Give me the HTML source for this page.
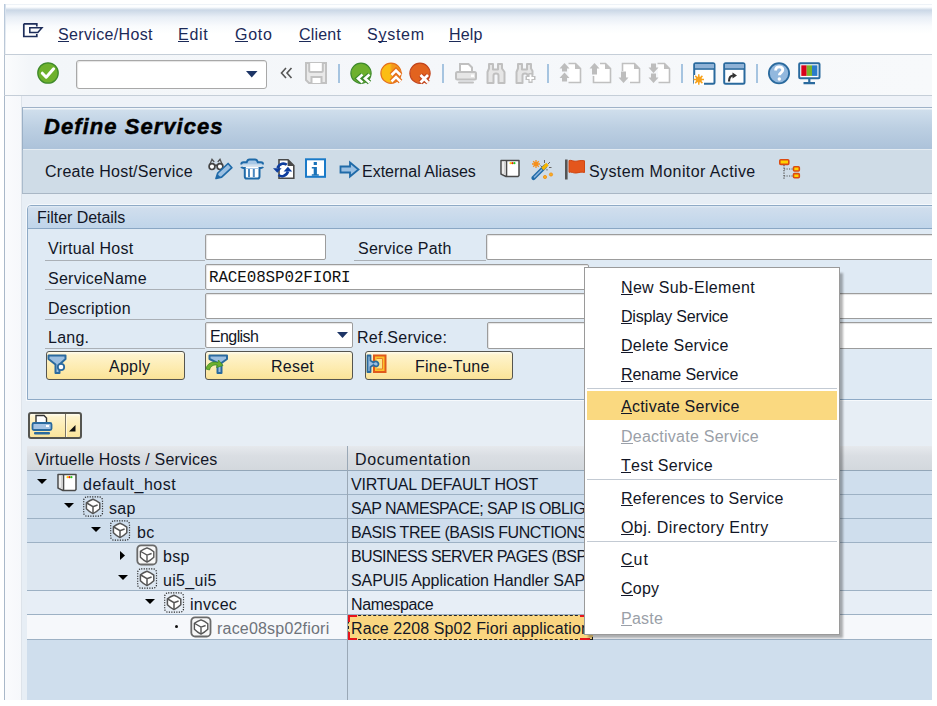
<!DOCTYPE html>
<html><head><meta charset="utf-8">
<style>
*{margin:0;padding:0;box-sizing:border-box}
html,body{width:937px;height:706px;overflow:hidden;background:#fff}
body{position:relative;font-family:"Liberation Sans",sans-serif;font-size:16px;color:#121626}
.a{position:absolute}
.t{position:absolute;white-space:nowrap;line-height:20px;font-size:16px;letter-spacing:0.25px}
u{text-decoration:none;position:relative}
u:after{content:"";position:absolute;left:0;right:0;bottom:1px;height:1px;background:currentColor}
svg{position:absolute;overflow:visible}
.inp{position:absolute;background:#fff;border:1px solid #9c9c9c;border-radius:2px;box-shadow:inset 1px 1px 1px #e4e4e4}
.lbl{position:absolute;height:1px;background:#aab0b6}
.btn{position:absolute;height:29px;border:1px solid #55554f;border-radius:3px;background:linear-gradient(#fffdf0 0,#fef3cc 3px,#fdedb4 14px,#fbe49a 26px,#f5dc90 28px)}
.btn .t{top:5px}
.mi{position:absolute;left:621px;white-space:nowrap;line-height:20px;font-size:16px;color:#121626;letter-spacing:0.25px}
.dis{color:#9a9fa8}
.sep{position:absolute;height:1px;background:#c3cad3}
.tsep{position:absolute;width:2px;background:#a6c4e0}
.hl{position:absolute;left:27px;width:905px;height:1px;background:#9db1c4}
</style></head><body>
<div id="clip" style="position:absolute;left:0;top:0;width:932px;height:700px;overflow:hidden">
<!-- frame -->
<div class="a" style="left:4px;top:4px;width:928px;height:696px;background:#f2f5f9"></div>

<!-- menu bar -->
<div class="a" style="left:4px;top:4px;width:928px;height:50px;background:linear-gradient(#dfe7f0 0,#fdfeff 1px,#fdfeff 3px,#cad7e6 6px,#e8eef6 13px,#f9fbfd 22px,#fff 30px,#fff 50px)"></div>
<div class="a" style="left:4px;top:4px;width:1px;height:50px;background:linear-gradient(#b8c9dc,#bcc8d6)"></div><div class="a" style="left:5px;top:4px;width:1px;height:50px;background:linear-gradient(#d5e0ec,#eef2f6)"></div>
<div class="a" style="left:4px;top:54px;width:928px;height:1px;background:#c5ced8"></div>
<svg style="left:22px;top:22px" width="22" height="16" viewBox="0 0 22 16"><path d="M1.8 1.8H14.8V4.5M1.8 1.8V14.5H14.8V12" fill="none" stroke="#1d2d5a" stroke-width="1.7"/><path d="M7.8 5.8H20L15.8 10.6H7.8Z" fill="none" stroke="#1d2d5a" stroke-width="1.5"/></svg>
<div class="t" style="left:58px;top:25px;color:#1c2a58;letter-spacing:0.35px"><u>S</u>ervice/Host</div>
<div class="t" style="left:178px;top:25px;color:#1c2a58;letter-spacing:0.7px"><u>E</u>dit</div>
<div class="t" style="left:235px;top:25px;color:#1c2a58;letter-spacing:0.75px"><u>G</u>oto</div>
<div class="t" style="left:299px;top:25px;color:#1c2a58;letter-spacing:0.2px"><u>C</u>lient</div>
<div class="t" style="left:367px;top:25px;color:#1c2a58;letter-spacing:0.75px">S<u>y</u>stem</div>
<div class="t" style="left:449px;top:25px;color:#1c2a58;letter-spacing:0.2px"><u>H</u>elp</div>

<!-- system toolbar -->
<div class="a" style="left:4px;top:55px;width:928px;height:40px;background:linear-gradient(90deg,#fbfcfd 0,#f3f6f9 25px,#f5f7fa 50%,#f7f9fb)"></div>
<div class="a" style="left:4px;top:55px;width:1px;height:40px;background:#b3c0cf"></div>
<div class="a" style="left:4px;top:95px;width:928px;height:1px;background:#c5ced8"></div>
<!-- green check -->
<svg style="left:37px;top:62px" width="22" height="22" viewBox="0 0 22 22"><circle cx="11" cy="11" r="10.2" fill="#6eb12c" stroke="#3f8a2a" stroke-width="1.3"/><path d="M5.3 11.2L9.2 15.2L16.6 6.8" fill="none" stroke="#fff" stroke-width="3" stroke-linecap="round" stroke-linejoin="round"/></svg>
<!-- command field -->
<div class="inp" style="left:76px;top:60px;width:191px;height:29px;border:1.5px solid #a8a8a8;border-radius:3px"></div>
<svg style="left:246px;top:71px" width="12" height="7" viewBox="0 0 12 7"><path d="M0 0H11.5L5.75 6.5Z" fill="#1d3566"/></svg>
<svg style="left:280px;top:67px" width="13" height="12" viewBox="0 0 13 12"><path d="M6 1L1.5 6L6 11M11.5 1L7 6L11.5 11" fill="none" stroke="#555" stroke-width="1.6"/></svg>
<!-- save -->
<svg style="left:305px;top:62px" width="22" height="22" viewBox="0 0 22 22"><path d="M1 1H21V21H4L1 18Z" fill="#e9e9e9" stroke="#c2c2c2" stroke-width="2"/><path d="M4.2 1V8.5Q4.2 10 5.7 10H16.3Q17.8 10 17.8 8.5V1" fill="#fff" stroke="#c2c2c2" stroke-width="2"/><path d="M6.5 21V15H16.5V21" fill="#fff" stroke="#c2c2c2" stroke-width="2"/></svg>
<div class="tsep" style="left:338px;top:64px;height:19px"></div>
<!-- back -->
<svg style="left:350px;top:62px" width="23" height="23" viewBox="0 0 23 23"><circle cx="11" cy="11.2" r="10.1" fill="#6eb12e" stroke="#3e8a2c" stroke-width="1.2"/><path d="M12.5 12.5L8 16.5L12.5 20.5M19.5 12.5L15 16.5L19.5 20.5" fill="none" stroke="#3e8a2c" stroke-width="5" stroke-linejoin="miter"/><path d="M12.5 12.5L8 16.5L12.5 20.5M19.5 12.5L15 16.5L19.5 20.5" fill="none" stroke="#fff" stroke-width="2.6"/></svg>
<!-- up -->
<svg style="left:380px;top:62px" width="23" height="23" viewBox="0 0 23 23"><defs><linearGradient id="og" x1="0" x2="1"><stop offset="0.45" stop-color="#fbbd14"/><stop offset="0.55" stop-color="#f39a1c"/></linearGradient></defs><circle cx="11" cy="11.2" r="10.1" fill="url(#og)" stroke="#e5701c" stroke-width="1.2"/><path d="M11.5 13L16 8.5L20.5 13M11.5 19.5L16 15L20.5 19.5" fill="none" stroke="#e5701c" stroke-width="5.2"/><path d="M11.5 13L16 8.5L20.5 13M11.5 19.5L16 15L20.5 19.5" fill="none" stroke="#fff" stroke-width="2.6"/></svg>
<!-- cancel -->
<svg style="left:409px;top:62px" width="23" height="23" viewBox="0 0 23 23"><circle cx="11" cy="11.2" r="10.1" fill="#e2631f" stroke="#c2441c" stroke-width="1.2"/><path d="M11.5 13L19 20.5M19 13L11.5 20.5" fill="none" stroke="#c2441c" stroke-width="5"/><path d="M11.5 13L19 20.5M19 13L11.5 20.5" fill="none" stroke="#fff" stroke-width="2.8"/></svg>
<div class="tsep" style="left:442px;top:64px;height:19px"></div>
<!-- print -->
<svg style="left:455px;top:62px" width="22" height="22" viewBox="0 0 22 22"><path d="M5 9V2H13.5L17 5.5V9" fill="#fff" stroke="#c0c0c0" stroke-width="2"/><rect x="1" y="10" width="20" height="7.5" rx="1.5" fill="#e6e6e6" stroke="#c0c0c0" stroke-width="2"/><rect x="16" y="12.5" width="3" height="2.5" fill="#fff"/><rect x="3" y="19.6" width="16" height="2" rx="1" fill="#c0c0c0"/></svg>
<!-- binoculars -->
<svg style="left:486px;top:62px" width="20" height="22" viewBox="0 0 20 22"><path d="M3 6.5V2H7V7.5H12V2H16V6.5L18.5 10V21H12.5V13.5Q12.5 11.5 10 11.5Q7.5 11.5 7.5 13.5V21H1.5V10Z" fill="#e6e6e6" stroke="#c0c0c0" stroke-width="2" stroke-linejoin="round"/></svg>
<svg style="left:515px;top:62px" width="22" height="22" viewBox="0 0 22 22"><path d="M3 6.5V2H7V7.5H12V2H16V6.5L17.5 9V13H12.5V13.5Q12.5 11.5 10 11.5Q7.5 11.5 7.5 13.5V21H1.5V10Z" fill="#e6e6e6" stroke="#c0c0c0" stroke-width="2" stroke-linejoin="round"/><path d="M15.5 11V21M10.5 16H20.5" stroke="#c0c0c0" stroke-width="4.2"/><path d="M15.5 12.5V19.5M12 16H19" stroke="#fff" stroke-width="1.8"/></svg>
<div class="tsep" style="left:547px;top:64px;height:19px"></div>
<!-- page nav icons -->
<svg style="left:559px;top:62px" width="23" height="22" viewBox="0 0 23 22"><path d="M9.5 1.5H16.5L21.5 6.5V20.5H9.5" fill="#fff" stroke="#c0c0c0" stroke-width="1.6"/><path d="M16 1L22 7H16Z" fill="#c0c0c0"/><path d="M0.5 6.5L5.5 1L10.5 6.5H8V9.5H3V6.5Z" fill="#bdbdbd"/><path d="M0.5 16L5.5 10.5L10.5 16H8V19.5H3V16Z" fill="#bdbdbd"/></svg>
<svg style="left:589px;top:62px" width="23" height="22" viewBox="0 0 23 22"><path d="M11 1.5H16.5L21.5 6.5V20.5H4.5V14" fill="#fff" stroke="#c0c0c0" stroke-width="1.6"/><path d="M16 1L22 7H16Z" fill="#c0c0c0"/><path d="M0.5 6.5L5.5 1L10.5 6.5H8V12.5H3V6.5Z" fill="#bdbdbd"/></svg>
<svg style="left:618px;top:62px" width="23" height="22" viewBox="0 0 23 22"><path d="M4.5 9V1.5H16.5L21.5 6.5V20.5H12" fill="#fff" stroke="#c0c0c0" stroke-width="1.6"/><path d="M16 1L22 7H16Z" fill="#c0c0c0"/><path d="M0.5 15.5L5.5 21L10.5 15.5H8V9.5H3V15.5Z" fill="#bdbdbd"/></svg>
<svg style="left:648px;top:62px" width="23" height="22" viewBox="0 0 23 22"><path d="M9.5 1.5H16.5L21.5 6.5V20.5H10.5" fill="#fff" stroke="#c0c0c0" stroke-width="1.6"/><path d="M16 1L22 7H16Z" fill="#c0c0c0"/><path d="M0.5 5.5L5.5 11L10.5 5.5H8V1.5H3V5.5Z" fill="#bdbdbd"/><path d="M0.5 15.5L5.5 21L10.5 15.5H8V11.5H3V15.5Z" fill="#bdbdbd"/></svg>
<div class="tsep" style="left:681px;top:64px;height:19px"></div>
<!-- new session -->
<svg style="left:693px;top:62px" width="23" height="23" viewBox="0 0 23 23"><rect x="1.2" y="1.2" width="20.3" height="20.6" rx="1.5" fill="#fff" stroke="#2a6a9e" stroke-width="2"/><rect x="2" y="2" width="19" height="4.5" fill="#8fb2d6"/><path d="M1.5 7H21.5" stroke="#2a6a9e" stroke-width="1.6"/><rect x="1" y="13" width="10" height="10" fill="#fff"/><circle cx="5.8" cy="17.5" r="3" fill="#f7a21c"/><path d="M5.8 12.3V22.7M0.6 17.5H11M2.2 13.9L9.4 21.1M9.4 13.9L2.2 21.1" stroke="#f7a21c" stroke-width="1.5"/></svg>
<svg style="left:723px;top:62px" width="23" height="23" viewBox="0 0 23 23"><rect x="1.2" y="1.2" width="20.3" height="20.6" rx="1.5" fill="#fff" stroke="#2a6a9e" stroke-width="2"/><rect x="2" y="2" width="19" height="4.5" fill="#8fb2d6"/><path d="M1.5 7H21.5" stroke="#2a6a9e" stroke-width="1.6"/><path d="M6 19.5C6 15.5 7.5 13.5 10.5 13.5" fill="none" stroke="#333" stroke-width="2.2"/><path d="M9.5 10.5L14 13.5L9.5 16.5Z" fill="#333"/></svg>
<div class="tsep" style="left:756px;top:64px;height:19px"></div>
<!-- help -->
<svg style="left:768px;top:62px" width="23" height="23" viewBox="0 0 23 23"><circle cx="11" cy="11.2" r="10.1" fill="#92b8de" stroke="#2a6a9e" stroke-width="1.8"/><path d="M7.6 8.5C7.6 5.8 9.2 4.8 11.2 4.8C13.3 4.8 14.8 6 14.8 8C14.8 10.5 11.3 10.6 11.3 13.3" fill="none" stroke="#fff" stroke-width="2.8"/><circle cx="11.3" cy="17" r="1.7" fill="#fff"/></svg>
<!-- monitor -->
<svg style="left:798px;top:62px" width="23" height="23" viewBox="0 0 23 23"><rect x="1.2" y="1.2" width="20.3" height="15" rx="1" fill="#fff" stroke="#2a6a9e" stroke-width="2"/><rect x="3.3" y="3.3" width="5.4" height="10.6" fill="#d9001b"/><rect x="8.7" y="3.3" width="5.3" height="10.6" fill="#7ab52a"/><rect x="14" y="3.3" width="5.4" height="10.6" fill="#2b7cc9"/><path d="M11.3 16.5V20.5M5.5 21.2H17" stroke="#2a6a9e" stroke-width="2.2"/></svg>

<!-- body -->
<div class="a" style="left:5px;top:96px;width:927px;height:604px;background:#edf1f6"></div>
<div class="a" style="left:5px;top:96px;width:16px;height:604px;background:linear-gradient(90deg,#fafbfd,#f6f8fb)"></div>
<div class="a" style="left:21px;top:96px;width:1px;height:604px;background:#dde3ea"></div>
<div class="a" style="left:4px;top:96px;width:1px;height:604px;background:#a9b8c9"></div>
<div class="a" style="left:22px;top:96px;width:910px;height:11px;background:#eef2f8"></div>

<!-- title panel -->
<div class="a" style="left:22px;top:107px;width:910px;height:43px;border-left:1px solid #9bb0c6;border-top:1px solid #9fb2c8;background:linear-gradient(#f2f6fa 0,#f2f6fa 1px,#cfdeec 2px,#bccfe2 20px,#adc3da 40px)"></div>
<div class="a" style="left:23px;top:149px;width:909px;height:1px;background:#e4ecf2"></div>
<div class="t" style="left:44px;top:115px;font-size:22px;line-height:24px;font-weight:bold;font-style:italic;color:#000;letter-spacing:1.05px;-webkit-text-stroke:0.5px #000">Define Services</div>

<!-- application toolbar -->
<div class="a" style="left:22px;top:150px;width:910px;height:43px;background:#cfdce7;border-left:1px solid #aabbcc"></div>
<div class="a" style="left:22px;top:193px;width:910px;height:1px;background:#a9b7c5"></div>
<div class="t" style="left:45px;top:162px">Create Host/Service</div>
<!-- glasses pencil -->
<svg style="left:205px;top:156px" width="28" height="26" viewBox="0 0 28 26"><path d="M4.8 8.5L7 3.2L9.2 6M12.8 6L15 3.2L17.2 8.5" stroke="#555" stroke-width="1.3" fill="none"/><circle cx="7" cy="10.6" r="2.9" fill="#fff" stroke="#444" stroke-width="1.7"/><circle cx="15" cy="10.6" r="2.9" fill="#fff" stroke="#444" stroke-width="1.7"/><path d="M9.5 9.3H12.5" stroke="#444" stroke-width="1.6"/><path d="M11 22.5L12.8 17L23.1 7.5L26.9 11.7L16.6 21.2Z" fill="#9cc0e2" stroke="#1f6aa8" stroke-width="1.7" stroke-linejoin="round"/><path d="M11 22.5L12.5 18.2L15.5 21Z" fill="#1f6aa8"/></svg>
<!-- trash -->
<svg style="left:238px;top:156px" width="28" height="26" viewBox="0 0 28 26"><path d="M3.3 8.4Q3.3 6.3 5.5 6.3H8.7Q9.5 3.6 11.5 3.6H17Q19 3.6 19.8 6.3H23Q25 6.3 25 8.4" fill="#a8c8e6" stroke="#1f6aa8" stroke-width="2"/><path d="M4 8.6H24.5V10H4Z" fill="#cfe0f0"/><path d="M3.3 10.8Q3.8 12 6.8 12V20.5Q6.8 22.6 8.8 22.6H19.5Q21.5 22.6 21.5 20.5V12Q24.5 12 25 10.8" fill="#fff" stroke="#1f6aa8" stroke-width="2"/><path d="M11 12.5V21M15.8 12.5V21" stroke="#4a88c0" stroke-width="2"/><path d="M7.8 12.5H20.5" stroke="#a8c8e6" stroke-width="1"/></svg>
<!-- refresh -->
<svg style="left:272px;top:158px" width="23" height="22" viewBox="0 0 23 22"><path d="M7 1.8H16L21.8 7.5V20.2H7Z" fill="#fff" stroke="#4a4a4a" stroke-width="1.6"/><path d="M15.6 1.2L22.4 8H15.6Z" fill="#4a4a4a"/><path d="M14.8 6.8C12.5 4.8 7.5 5 5.5 10" stroke="#0d3d9e" stroke-width="2.6" fill="none"/><path d="M1 10.3H9.6L5.3 14.8Z" fill="#0d3d9e"/><path d="M6.5 17C9 19 14 18.8 16 13.5" stroke="#0d3d9e" stroke-width="2.6" fill="none"/><path d="M11.6 13.4H20.2L15.9 8.8Z" fill="#0d3d9e"/></svg>
<!-- info -->
<svg style="left:305px;top:158px" width="21" height="21" viewBox="0 0 21 21"><rect x="1" y="1.3" width="19" height="17.5" fill="#fff" stroke="#1a7ac8" stroke-width="2"/><rect x="8.7" y="4" width="3.2" height="3" fill="#1a72b8"/><path d="M6.8 9H11.9V16.2H13.8V17.8H6.8V16.2H8.7V10.6H6.8Z" fill="#1a72b8"/></svg>
<!-- arrow -->
<svg style="left:339px;top:161px" width="21" height="17" viewBox="0 0 21 17"><path d="M1.5 5.5H11V1.5L19.5 8.5L11 15.5V11.5H1.5Z" fill="#9cc0e2" stroke="#1f6aa8" stroke-width="1.8" stroke-linejoin="miter"/></svg>
<div class="t" style="left:362px;top:162px;letter-spacing:0px">External Aliases</div>
<!-- book -->
<svg style="left:497px;top:156px" width="26" height="24" viewBox="0 0 26 24"><path d="M4 4.5H22V19.5L21 20.5H9L4 18Z" fill="#fff" stroke="#4a4a4a" stroke-width="1.5" stroke-linejoin="round"/><path d="M9.5 4.5V20.5" stroke="#4a4a4a" stroke-width="1.6"/><rect x="5.4" y="5.6" width="3.2" height="12.6" fill="#d2d2d2"/><path d="M6.2 6V17.5" stroke="#fff" stroke-width="0.9"/><circle cx="13.6" cy="7.2" r="1.1" fill="#ffd000"/><circle cx="15.5" cy="7.2" r="1.1" fill="#ee2200"/><circle cx="17.4" cy="7.2" r="1.1" fill="#22cc22"/></svg>
<!-- wand -->
<svg style="left:530px;top:159px" width="24" height="21" viewBox="0 0 24 21"><path d="M3.5 19L15 7.5" stroke="#1f6aa8" stroke-width="4.2" stroke-linecap="round"/><path d="M4 18.5L12 10.5" stroke="#8cb4dc" stroke-width="1.6"/><path d="M12.5 10L17.5 5" stroke="#f5b400" stroke-width="3.6"/><path d="M6 1V9M2 5H10M3.2 2.2L8.8 7.8M8.8 2.2L3.2 7.8" stroke="#f5901c" stroke-width="1.3"/><circle cx="6" cy="5" r="2" fill="#f5901c"/><path d="M14.5 1V4M20 3L18 5M21.5 8.5H19M10.5 6.5L12 8M17 10V11.5" stroke="#666" stroke-width="1"/><circle cx="15" cy="18" r="1.6" fill="#f8b020" stroke="#f08a10" stroke-width="0.8"/><circle cx="21" cy="15.5" r="1.6" fill="#f8b020" stroke="#f08a10" stroke-width="0.8"/></svg>
<!-- flag -->
<svg style="left:564px;top:159px" width="22" height="21" viewBox="0 0 22 21"><path d="M2.3 0.5V20.5" stroke="#555" stroke-width="2.6"/><path d="M5 1.5C7.5 0.8 9 2.5 12 2.2C15 2 16.5 1 20.5 1.8V13.5C17 12.5 15 13.8 12 14C9 14.2 7.5 12.5 5 13.3Z" fill="#e4561c" stroke="#cf4712" stroke-width="1"/></svg>
<div class="t" style="left:589px;top:162px;letter-spacing:0.4px">System Monitor Active</div>
<!-- tree icon -->
<svg style="left:778px;top:158px" width="23" height="23" viewBox="0 0 23 23"><rect x="1.8" y="1.8" width="9" height="4.6" rx="1" fill="#ffd200" stroke="#dc4a10" stroke-width="1.6"/><rect x="15.5" y="8.8" width="5.8" height="4.2" rx="1" fill="#ffd200" stroke="#dc4a10" stroke-width="1.6"/><rect x="15.5" y="15.6" width="5.8" height="4.2" rx="1" fill="#ffd200" stroke="#dc4a10" stroke-width="1.6"/><path d="M6 7V22M6 11H14.5M6 18H14.5" stroke="#555" stroke-width="1.2" stroke-dasharray="1.2 1.3"/></svg>

<!-- body below -->
<div class="a" style="left:22px;top:194px;width:910px;height:506px;background:#e7eef5"></div>

<!-- group box -->
<div class="a" style="left:26px;top:204px;width:912px;height:197px;border-radius:5px 0 0 0;background:#f6f9fc"></div>
<div class="a" style="left:27px;top:205px;width:910px;height:195px;border:1px solid #8eaac6;border-radius:4px 0 0 0;background:#dfeaf4;overflow:hidden">
  <div class="a" style="left:0;top:0;width:910px;height:23px;background:linear-gradient(#e2ecf6 0,#d0deed 2px,#c0d5ea 21px);border-bottom:1px solid #8aa7c4"></div>
</div>
<div class="t" style="left:37px;top:207.5px;letter-spacing:-0.05px">Filter Details</div>

<div class="t" style="left:48px;top:239px">Virtual Host</div>
<div class="t" style="left:48px;top:269px">ServiceName</div>
<div class="t" style="left:48px;top:298.5px">Description</div>
<div class="t" style="left:48px;top:328px">Lang.</div>
<div class="lbl" style="left:45px;top:260px;width:160px"></div>
<div class="lbl" style="left:45px;top:289px;width:160px"></div>
<div class="lbl" style="left:45px;top:319px;width:160px"></div>
<div class="lbl" style="left:45px;top:348px;width:160px"></div>

<div class="inp" style="left:205px;top:234px;width:121px;height:26px"></div>
<div class="t" style="left:358px;top:239px">Service Path</div>
<div class="lbl" style="left:354px;top:260px;width:132px"></div>
<div class="inp" style="left:486px;top:234px;width:460px;height:26px"></div>
<div class="inp" style="left:205px;top:264px;width:384px;height:26px"></div>
<div class="t" style="left:209px;top:268px;font-family:'Liberation Mono',monospace;font-size:15.9px;letter-spacing:-0.1px;color:#111">RACE08SP02FIORI</div>
<div class="inp" style="left:205px;top:293px;width:740px;height:26px"></div>
<div class="inp" style="left:205px;top:322px;width:148px;height:26px"></div>
<div class="t" style="left:210px;top:327px;letter-spacing:-0.6px">English</div>
<svg style="left:337px;top:332px" width="11" height="7" viewBox="0 0 11 7"><path d="M0 0H11L5.5 6Z" fill="#1d3566"/></svg>
<div class="t" style="left:357px;top:328px">Ref.Service:</div>
<div class="inp" style="left:487px;top:322px;width:460px;height:27px"></div>

<div class="btn" style="left:46px;top:351px;width:139px"><div class="t" style="left:62px">Apply</div></div>
<svg style="left:47px;top:354px" width="20" height="20" viewBox="0 0 20 20"><path d="M1.5 1.5H18.5V5L12.5 10.5V19H8.5V10.5L1.5 5Z" fill="#9cbfe0" stroke="#2a6a9e" stroke-width="2" stroke-linejoin="round"/><circle cx="14" cy="13" r="3.2" fill="#fff" stroke="#2a6a9e" stroke-width="1.8"/></svg>
<div class="btn" style="left:205px;top:351px;width:148px"><div class="t" style="left:65px">Reset</div></div>
<svg style="left:206px;top:354px" width="22" height="20" viewBox="0 0 22 20"><path d="M3.5 1.5H21V5L15.5 9V19H11.5V9L3.5 5Z" fill="#9cbfe0" stroke="#2a6a9e" stroke-width="2" stroke-linejoin="round"/><path d="M0 15C1 9.5 6 7 12 8.5L12.5 6L17 11.5L10.5 13.5L11.3 11C7.5 10.5 4.5 12 3.5 16Z" fill="#6db02c" stroke="#3d8a2a" stroke-width="0.8"/></svg>
<div class="btn" style="left:365px;top:351px;width:148px"><div class="t" style="left:49px">Fine-Tune</div></div>
<svg style="left:366px;top:354px" width="21" height="20" viewBox="0 0 21 20"><rect x="8" y="1.5" width="11.5" height="16.5" fill="#fcc22a" stroke="#e05a1a" stroke-width="2"/><path d="M10.5 4.5H16.5V15H10.5" fill="#fde48a" stroke="#e8802a" stroke-width="1"/><path d="M1.5 1.5H4.5V6.5L7.5 8.5C8.5 7.2 10.5 7 11.8 8.3C13 9.6 12.6 11.8 10.8 12.3C9.6 12.6 8.3 12 7.5 11L4.5 13V18H1.5Z" fill="#9cbfe0" stroke="#2a6a9e" stroke-width="1.8" stroke-linejoin="round"/></svg>

<!-- tree toolbar button -->
<div class="a" style="left:28px;top:412px;width:54px;height:27px;border:2px solid #555550;border-radius:3px;background:linear-gradient(#fffdf0 0,#fef3cc 3px,#fdedb4 12px,#fbe49a 24px,#f5dc90 27px)"></div>
<div class="a" style="left:65px;top:414px;width:1.5px;height:23px;background:#7c7565"></div>
<div class="a" style="left:66px;top:414px;width:1px;height:23px;background:#fff8dc"></div>
<svg style="left:31px;top:414px" width="22" height="22" viewBox="0 0 22 22"><path d="M5 8V1.5H13L15.5 4V8" fill="#fff" stroke="#333" stroke-width="1.4"/><rect x="1.5" y="9" width="19" height="7" rx="1.5" fill="#a5c3e3" stroke="#2a6a9e" stroke-width="1.8"/><rect x="15" y="11" width="3" height="2" fill="#fff"/><rect x="3" y="18" width="16" height="2.4" rx="1" fill="#2a6a9e"/></svg>
<svg style="left:69px;top:425px" width="7" height="7" viewBox="0 0 7 7"><path d="M6.5 0V6.5H0Z" fill="#111"/></svg>

<!-- tree table -->
<div class="a" style="left:27px;top:447px;width:905px;height:253px;background:#cfdeed"></div>
<div class="a" style="left:27px;top:446px;width:905px;height:24px;background:linear-gradient(#e6e9ed,#dadee3 40%,#d3d8dd)"></div>
<div class="hl" style="top:470px;background:#93a6b8"></div>
<div class="t" style="left:35px;top:450px;letter-spacing:0.19px">Virtuelle Hosts / Services</div>
<div class="t" style="left:355px;top:450px;letter-spacing:0.65px">Documentation</div>

<div class="a" style="left:27px;top:543px;width:905px;height:47px;background:#dde7f1"></div>
<div class="a" style="left:27px;top:591px;width:905px;height:23px;background:#e7eef6"></div>
<div class="a" style="left:27px;top:615px;width:905px;height:24px;background:#f6f8fb"></div>
<div class="hl" style="top:494px"></div>
<div class="hl" style="top:518px"></div>
<div class="hl" style="top:542px"></div>
<div class="hl" style="top:590px"></div>
<div class="hl" style="top:614px"></div>
<div class="hl" style="top:639px"></div>
<div class="a" style="left:347px;top:446px;width:1px;height:254px;background:#9aa8b6"></div>

<!-- tree rows -->
<svg style="left:37px;top:479px" width="10" height="6" viewBox="0 0 10 6"><path d="M0 0H10L5 5Z" fill="#000"/></svg>
<svg style="left:54px;top:470px" width="26" height="24" viewBox="0 0 26 24"><path d="M4 4.5H22V19.5L21 20.5H9L4 18Z" fill="#fff" stroke="#4a4a4a" stroke-width="1.5" stroke-linejoin="round"/><path d="M9.5 4.5V20.5" stroke="#4a4a4a" stroke-width="1.6"/><rect x="5.4" y="5.6" width="3.2" height="12.6" fill="#d2d2d2"/><path d="M6.2 6V17.5" stroke="#fff" stroke-width="0.9"/><circle cx="13.6" cy="7.2" r="1.1" fill="#ffd000"/><circle cx="15.5" cy="7.2" r="1.1" fill="#ee2200"/><circle cx="17.4" cy="7.2" r="1.1" fill="#22cc22"/></svg>
<div class="t" style="left:83px;top:475px;letter-spacing:0.5px">default_host</div>
<div class="t" style="left:351px;top:475px;letter-spacing:-0.17px">VIRTUAL DEFAULT HOST</div>

<svg style="left:64px;top:503px" width="10" height="6" viewBox="0 0 10 6"><path d="M0 0H10L5 5Z" fill="#000"/></svg>
<svg style="left:83px;top:496px" width="21" height="21" viewBox="0 0 21 21"><rect x="0.7" y="0.8" width="18.8" height="19.4" rx="3.5" fill="none" stroke="#1a1a1a" stroke-width="1.2" stroke-dasharray="1.1 1.4"/><path d="M10 3.3Q13.5 4.5 16.8 7.2V12.8Q13.5 16 10 17.6Q6.5 16 3.4 12.8V6.8Q6.5 4.5 10 3.3Z" fill="#fff" stroke="#555" stroke-width="1.5" stroke-linejoin="round"/><path d="M3.8 7L10 10.6L14.6 9M10 10.6V17.2" fill="none" stroke="#555" stroke-width="1.5"/></svg>
<div class="t" style="left:109px;top:499px;letter-spacing:0.3px">sap</div>
<div class="t" style="left:351px;top:499px;letter-spacing:-0.55px">SAP NAMESPACE; SAP IS OBLIGATORY</div>

<svg style="left:91px;top:527px" width="10" height="6" viewBox="0 0 10 6"><path d="M0 0H10L5 5Z" fill="#000"/></svg>
<svg style="left:110px;top:520px" width="21" height="21" viewBox="0 0 21 21"><rect x="0.7" y="0.8" width="18.8" height="19.4" rx="3.5" fill="none" stroke="#1a1a1a" stroke-width="1.2" stroke-dasharray="1.1 1.4"/><path d="M10 3.3Q13.5 4.5 16.8 7.2V12.8Q13.5 16 10 17.6Q6.5 16 3.4 12.8V6.8Q6.5 4.5 10 3.3Z" fill="#fff" stroke="#555" stroke-width="1.5" stroke-linejoin="round"/><path d="M3.8 7L10 10.6L14.6 9M10 10.6V17.2" fill="none" stroke="#555" stroke-width="1.5"/></svg>
<div class="t" style="left:137px;top:523px;letter-spacing:0.3px">bc</div>
<div class="t" style="left:351px;top:523px;letter-spacing:-0.45px">BASIS TREE (BASIS FUNCTIONS)</div>

<svg style="left:120px;top:551px" width="6" height="9" viewBox="0 0 6 9"><path d="M0 0V9L5 4.5Z" fill="#000"/></svg>
<svg style="left:136px;top:544px" width="22" height="22" viewBox="0 0 22 22"><rect x="1.3" y="1.3" width="19.2" height="19.2" rx="3.8" fill="#f8f8f8" stroke="#6a6a6a" stroke-width="1.8"/><path d="M11 3.8Q14.5 5 17.8 7.7V13.3Q14.5 16.5 11 18.1Q7.5 16.5 4.4 13.3V7.3Q7.5 5 11 3.8Z" fill="#fff" stroke="#555" stroke-width="1.4" stroke-linejoin="round"/><path d="M4.8 7.5L11 11.1L15.6 9.5M11 11.1V17.7" fill="none" stroke="#555" stroke-width="1.4"/></svg>
<div class="t" style="left:163px;top:547px;letter-spacing:0.3px">bsp</div>
<div class="t" style="left:351px;top:547px;letter-spacing:-0.6px">BUSINESS SERVER PAGES (BSP) RUNTIME</div>

<svg style="left:118px;top:575px" width="10" height="6" viewBox="0 0 10 6"><path d="M0 0H10L5 5Z" fill="#000"/></svg>
<svg style="left:137px;top:568px" width="21" height="21" viewBox="0 0 21 21"><rect x="0.7" y="0.8" width="18.8" height="19.4" rx="3.5" fill="none" stroke="#1a1a1a" stroke-width="1.2" stroke-dasharray="1.1 1.4"/><path d="M10 3.3Q13.5 4.5 16.8 7.2V12.8Q13.5 16 10 17.6Q6.5 16 3.4 12.8V6.8Q6.5 4.5 10 3.3Z" fill="#fff" stroke="#555" stroke-width="1.5" stroke-linejoin="round"/><path d="M3.8 7L10 10.6L14.6 9M10 10.6V17.2" fill="none" stroke="#555" stroke-width="1.5"/></svg>
<div class="t" style="left:163px;top:571px;letter-spacing:0.3px">ui5_ui5</div>
<div class="t" style="left:351px;top:571px;letter-spacing:-0.05px">SAPUI5 Application Handler SAP</div>

<svg style="left:145px;top:599px" width="10" height="6" viewBox="0 0 10 6"><path d="M0 0H10L5 5Z" fill="#000"/></svg>
<svg style="left:164px;top:592px" width="21" height="21" viewBox="0 0 21 21"><rect x="0.7" y="0.8" width="18.8" height="19.4" rx="3.5" fill="none" stroke="#1a1a1a" stroke-width="1.2" stroke-dasharray="1.1 1.4"/><path d="M10 3.3Q13.5 4.5 16.8 7.2V12.8Q13.5 16 10 17.6Q6.5 16 3.4 12.8V6.8Q6.5 4.5 10 3.3Z" fill="#fff" stroke="#555" stroke-width="1.5" stroke-linejoin="round"/><path d="M3.8 7L10 10.6L14.6 9M10 10.6V17.2" fill="none" stroke="#555" stroke-width="1.5"/></svg>
<div class="t" style="left:190px;top:595px;letter-spacing:0.3px">invcec</div>
<div class="t" style="left:351px;top:595px;letter-spacing:-0.35px">Namespace</div>

<div class="a" style="left:175px;top:625px;width:3px;height:3px;background:#111;border-radius:50%"></div>
<svg style="left:190px;top:616px" width="22" height="22" viewBox="0 0 22 22"><rect x="1.3" y="1.3" width="19.2" height="19.2" rx="3.8" fill="#f8f8f8" stroke="#6a6a6a" stroke-width="1.8"/><path d="M11 3.8Q14.5 5 17.8 7.7V13.3Q14.5 16.5 11 18.1Q7.5 16.5 4.4 13.3V7.3Q7.5 5 11 3.8Z" fill="#fff" stroke="#555" stroke-width="1.4" stroke-linejoin="round"/><path d="M4.8 7.5L11 11.1L15.6 9.5M11 11.1V17.7" fill="none" stroke="#555" stroke-width="1.4"/></svg>
<div class="t" style="left:217px;top:619px;color:#6e737a;letter-spacing:0.2px">race08sp02fiori</div>
<div class="a" style="left:348px;top:615px;width:245px;height:25px;background:#fad680;border:1px dashed #222"></div>
<div class="a" style="left:348px;top:615px;width:9px;height:2px;background:#e8141c"></div>
<div class="a" style="left:348px;top:615px;width:2px;height:7px;background:#e8141c"></div>
<div class="a" style="left:348px;top:632px;width:2px;height:8px;background:#e8141c"></div>
<div class="a" style="left:348px;top:638px;width:9px;height:2px;background:#e8141c"></div>
<div class="a" style="left:580px;top:638px;width:10px;height:2px;background:#e8141c"></div>
<div class="a" style="left:580px;top:615px;width:10px;height:2px;background:#e8141c"></div>
<div class="t" style="left:351px;top:619px;letter-spacing:0.1px">Race 2208 Sp02 Fiori application</div>

<!-- context menu -->
<div class="a" style="left:588px;top:273px;width:255px;height:365px;background:rgba(0,0,0,0.3);filter:blur(1.2px)"></div>
<div class="a" style="left:584px;top:267px;width:256px;height:368px;background:#fff;border:1px solid #9a9a9a"></div>
<div class="a" style="left:587px;top:391px;width:250px;height:29px;background:#fad980"></div>
<div class="sep" style="left:587px;top:388px;width:250px"></div>
<div class="sep" style="left:587px;top:479px;width:250px"></div>
<div class="sep" style="left:587px;top:541px;width:250px"></div>
<div class="mi" style="top:277.5px;letter-spacing:0.33px"><u>N</u>ew Sub-Element</div>
<div class="mi" style="top:306.5px;letter-spacing:-0.2px"><u>D</u>isplay Service</div>
<div class="mi" style="top:336px"><u>D</u>elete Service</div>
<div class="mi" style="top:365px;letter-spacing:-0.07px"><u>R</u>ename Service</div>
<div class="mi" style="top:397px"><u>A</u>ctivate Service</div>
<div class="mi dis" style="top:426.5px"><u>D</u>eactivate Service</div>
<div class="mi" style="top:456px"><u>T</u>est Service</div>
<div class="mi" style="top:488.5px"><u>R</u>eferences to Service</div>
<div class="mi" style="top:517.5px;letter-spacing:0.4px"><u>O</u>bj. Directory Entry</div>
<div class="mi" style="top:550px;letter-spacing:1px"><u>C</u>ut</div>
<div class="mi" style="top:579px"><u>C</u>opy</div>
<div class="mi dis" style="top:609px"><u>P</u>aste</div>
</div>
</body></html>
